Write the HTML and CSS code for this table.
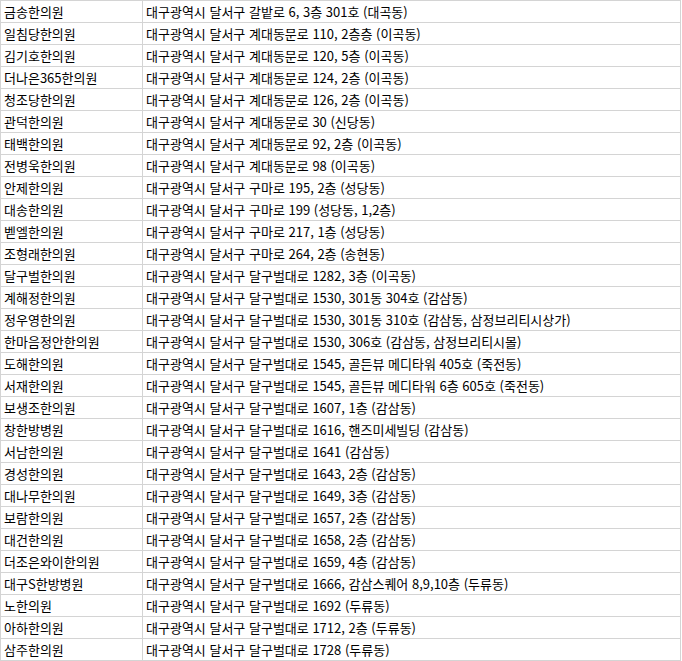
FILE: index.html
```html
<!DOCTYPE html>
<html lang="ko">
<head>
<meta charset="utf-8">
<title>달서구 한의원</title>
<link rel="stylesheet" href="styles.css">
</head>
<body>
<table class="list">
<colgroup><col class="c-name"><col class="c-addr"></colgroup>
<tbody>
<tr><td>금송한의원</td><td>대구광역시 달서구 갈밭로 6, 3층 301호 (대곡동)</td></tr>
<tr><td>일침당한의원</td><td>대구광역시 달서구 계대동문로 110, 2층층 (이곡동)</td></tr>
<tr><td>김기호한의원</td><td>대구광역시 달서구 계대동문로 120, 5층 (이곡동)</td></tr>
<tr><td>더나은365한의원</td><td>대구광역시 달서구 계대동문로 124, 2층 (이곡동)</td></tr>
<tr><td>청조당한의원</td><td>대구광역시 달서구 계대동문로 126, 2층 (이곡동)</td></tr>
<tr><td>관덕한의원</td><td>대구광역시 달서구 계대동문로 30 (신당동)</td></tr>
<tr><td>태백한의원</td><td>대구광역시 달서구 계대동문로 92, 2층 (이곡동)</td></tr>
<tr><td>전병욱한의원</td><td>대구광역시 달서구 계대동문로 98 (이곡동)</td></tr>
<tr><td>안제한의원</td><td>대구광역시 달서구 구마로 195, 2층 (성당동)</td></tr>
<tr><td>대송한의원</td><td>대구광역시 달서구 구마로 199 (성당동, 1,2층)</td></tr>
<tr><td>벧엘한의원</td><td>대구광역시 달서구 구마로 217, 1층 (성당동)</td></tr>
<tr><td>조형래한의원</td><td>대구광역시 달서구 구마로 264, 2층 (송현동)</td></tr>
<tr><td>달구벌한의원</td><td>대구광역시 달서구 달구벌대로 1282, 3층 (이곡동)</td></tr>
<tr><td>계해정한의원</td><td>대구광역시 달서구 달구벌대로 1530, 301동 304호 (감삼동)</td></tr>
<tr><td>정우영한의원</td><td>대구광역시 달서구 달구벌대로 1530, 301동 310호 (감삼동, 삼정브리티시상가)</td></tr>
<tr><td>한마음정안한의원</td><td>대구광역시 달서구 달구벌대로 1530, 306호 (감삼동, 삼정브리티시몰)</td></tr>
<tr><td>도해한의원</td><td>대구광역시 달서구 달구벌대로 1545, 골든뷰 메디타워 405호 (죽전동)</td></tr>
<tr><td>서재한의원</td><td>대구광역시 달서구 달구벌대로 1545, 골든뷰 메디타워 6층 605호 (죽전동)</td></tr>
<tr><td>보생조한의원</td><td>대구광역시 달서구 달구벌대로 1607, 1층 (감삼동)</td></tr>
<tr><td>창한방병원</td><td>대구광역시 달서구 달구벌대로 1616, 핸즈미세빌딩 (감삼동)</td></tr>
<tr><td>서남한의원</td><td>대구광역시 달서구 달구벌대로 1641 (감삼동)</td></tr>
<tr><td>경성한의원</td><td>대구광역시 달서구 달구벌대로 1643, 2층 (감삼동)</td></tr>
<tr><td>대나무한의원</td><td>대구광역시 달서구 달구벌대로 1649, 3층 (감삼동)</td></tr>
<tr><td>보람한의원</td><td>대구광역시 달서구 달구벌대로 1657, 2층 (감삼동)</td></tr>
<tr><td>대건한의원</td><td>대구광역시 달서구 달구벌대로 1658, 2층 (감삼동)</td></tr>
<tr><td>더조은와이한의원</td><td>대구광역시 달서구 달구벌대로 1659, 4층 (감삼동)</td></tr>
<tr><td>대구S한방병원</td><td>대구광역시 달서구 달구벌대로 1666, 감삼스퀘어 8,9,10층 (두류동)</td></tr>
<tr><td>노한의원</td><td>대구광역시 달서구 달구벌대로 1692 (두류동)</td></tr>
<tr><td>아하한의원</td><td>대구광역시 달서구 달구벌대로 1712, 2층 (두류동)</td></tr>
<tr><td>삼주한의원</td><td>대구광역시 달서구 달구벌대로 1728 (두류동)</td></tr>
</tbody>
</table>
</body>
</html>
```
FILE: styles.css
```css
html, body {
  margin: 0;
  padding: 0;
  background: #ffffff;
}
.list {
  border-collapse: collapse;
  table-layout: fixed;
  width: 681px;
  font-family: "Noto Sans CJK KR", "Noto Sans", sans-serif;
  font-size: 13px;
  color: #000000;
}
.c-name { width: 142px; }
.list td {
  border: 1px solid #d4d4d4;
  height: 21px;
  padding: 0 0 0 3px;
  line-height: 21px;
  white-space: nowrap;
  overflow: hidden;
  box-sizing: border-box;
  vertical-align: middle;
}
```
